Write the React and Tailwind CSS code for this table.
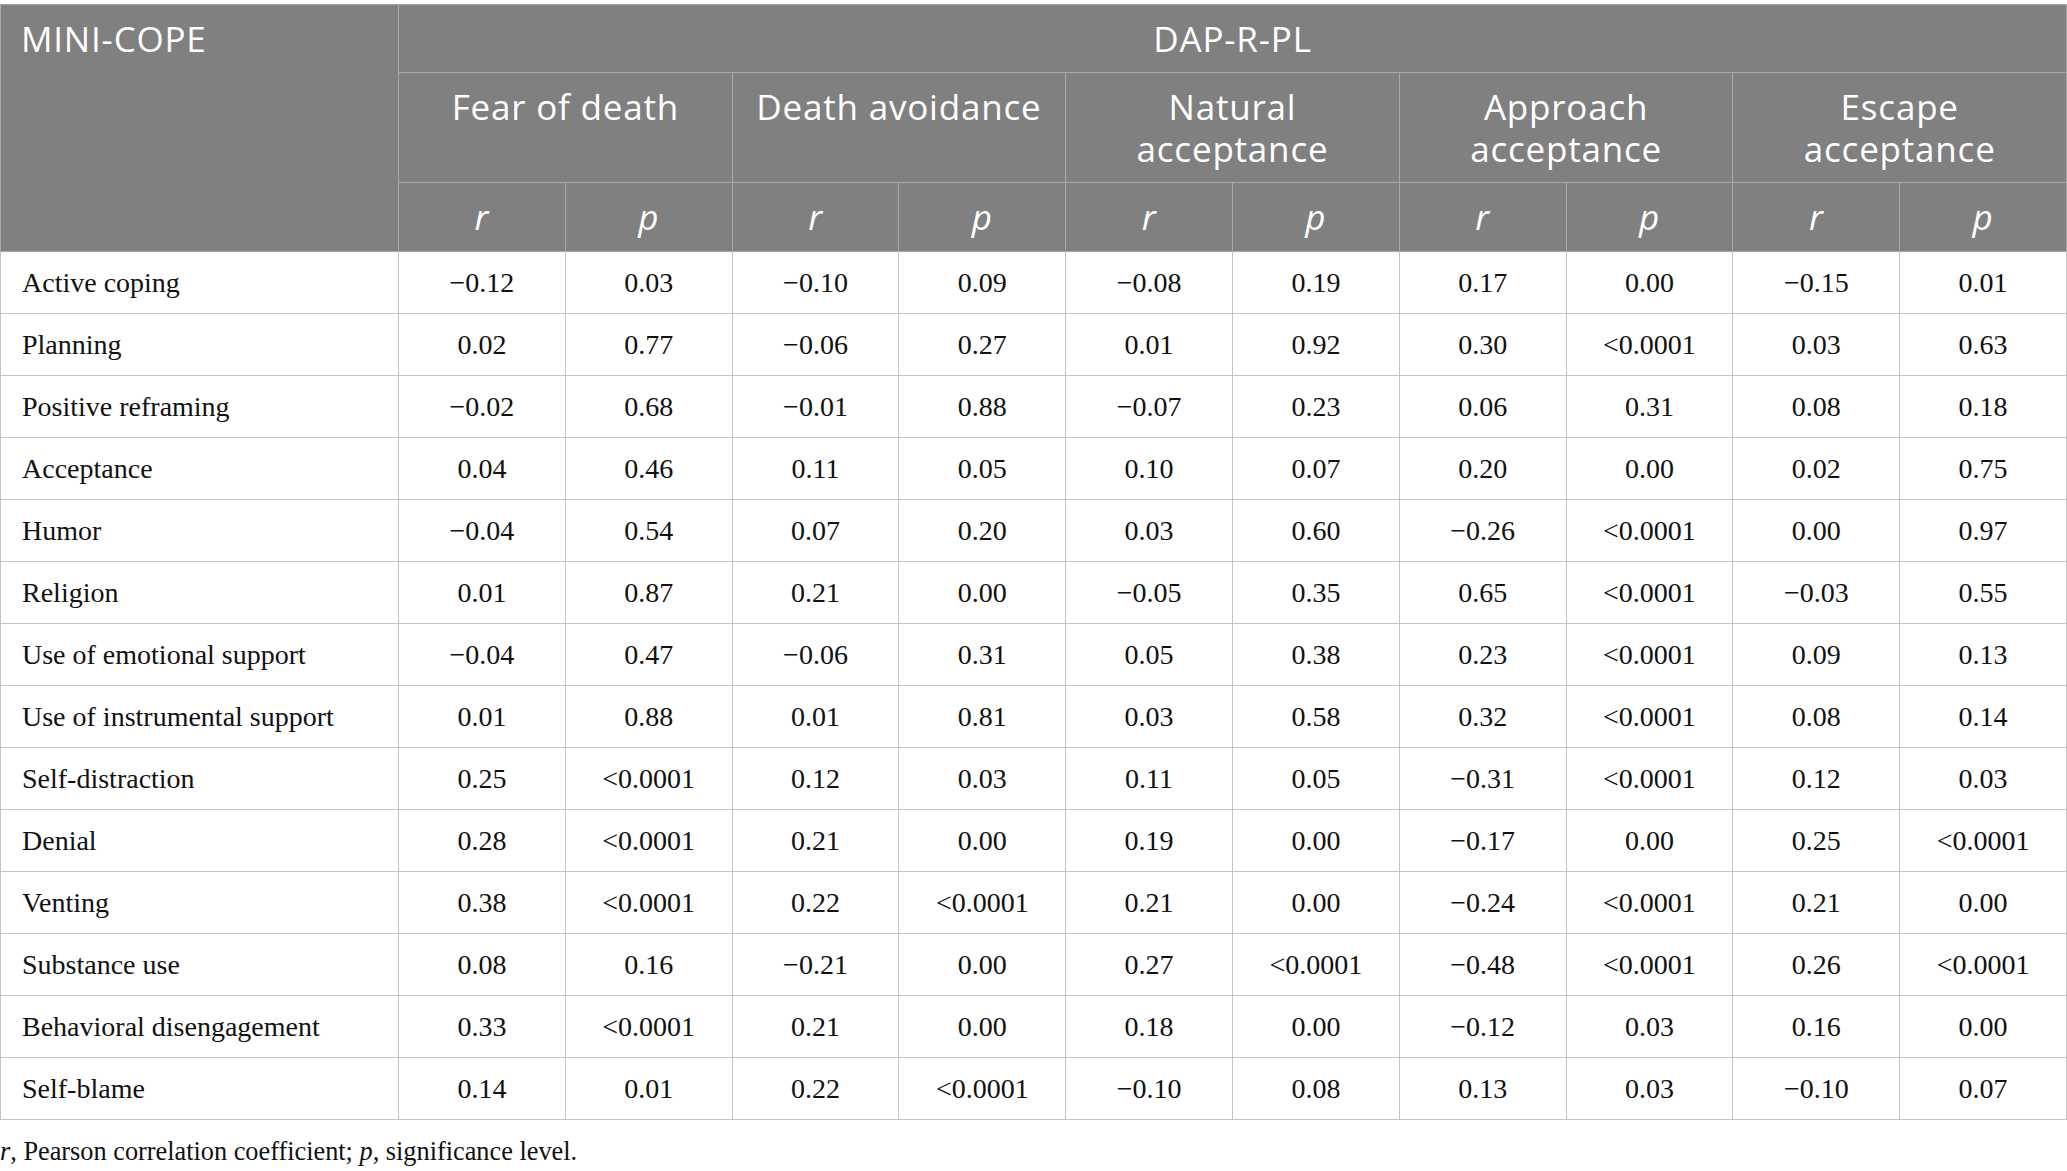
import React from "react";

const groups = [
  ["Fear of death"],
  ["Death avoidance"],
  ["Natural", "acceptance"],
  ["Approach", "acceptance"],
  ["Escape", "acceptance"],
];

const rows = [
  ["Active coping", "−0.12", "0.03", "−0.10", "0.09", "−0.08", "0.19", "0.17", "0.00", "−0.15", "0.01"],
  ["Planning", "0.02", "0.77", "−0.06", "0.27", "0.01", "0.92", "0.30", "<0.0001", "0.03", "0.63"],
  ["Positive reframing", "−0.02", "0.68", "−0.01", "0.88", "−0.07", "0.23", "0.06", "0.31", "0.08", "0.18"],
  ["Acceptance", "0.04", "0.46", "0.11", "0.05", "0.10", "0.07", "0.20", "0.00", "0.02", "0.75"],
  ["Humor", "−0.04", "0.54", "0.07", "0.20", "0.03", "0.60", "−0.26", "<0.0001", "0.00", "0.97"],
  ["Religion", "0.01", "0.87", "0.21", "0.00", "−0.05", "0.35", "0.65", "<0.0001", "−0.03", "0.55"],
  ["Use of emotional support", "−0.04", "0.47", "−0.06", "0.31", "0.05", "0.38", "0.23", "<0.0001", "0.09", "0.13"],
  ["Use of instrumental support", "0.01", "0.88", "0.01", "0.81", "0.03", "0.58", "0.32", "<0.0001", "0.08", "0.14"],
  ["Self-distraction", "0.25", "<0.0001", "0.12", "0.03", "0.11", "0.05", "−0.31", "<0.0001", "0.12", "0.03"],
  ["Denial", "0.28", "<0.0001", "0.21", "0.00", "0.19", "0.00", "−0.17", "0.00", "0.25", "<0.0001"],
  ["Venting", "0.38", "<0.0001", "0.22", "<0.0001", "0.21", "0.00", "−0.24", "<0.0001", "0.21", "0.00"],
  ["Substance use", "0.08", "0.16", "−0.21", "0.00", "0.27", "<0.0001", "−0.48", "<0.0001", "0.26", "<0.0001"],
  ["Behavioral disengagement", "0.33", "<0.0001", "0.21", "0.00", "0.18", "0.00", "−0.12", "0.03", "0.16", "0.00"],
  ["Self-blame", "0.14", "0.01", "0.22", "<0.0001", "−0.10", "0.08", "0.13", "0.03", "−0.10", "0.07"],
];

export default function App() {
  return (
    <div className="w-[2067px] bg-white pt-[4px]">
      <table className="w-[2066px] table-fixed border-collapse">
        <colgroup>
          <col className="w-[398px]" />
          {Array.from({ length: 10 }).map((_, i) => (
            <col key={i} className="w-[166.8px]" />
          ))}
        </colgroup>
        <thead className="bg-[#7f807f] text-white font-['Open_Sans',sans-serif] text-[35px] tracking-[0.8px] leading-[42px]">
          <tr className="h-[68px]">
            <th
              rowSpan={3}
              className="border border-[#a8a8a8] px-[20px] pt-[13px] text-left align-top font-normal"
            >
              MINI-COPE
            </th>
            <th colSpan={10} className="border border-[#a8a8a8] pt-[13px] align-top font-normal">
              DAP-R-PL
            </th>
          </tr>
          <tr className="h-[110px]">
            {groups.map((g, i) => (
              <th key={i} colSpan={2} className="border border-[#a8a8a8] pt-[13px] align-top font-normal">
                {g.map((l, j) => (
                  <div key={j}>{l}</div>
                ))}
              </th>
            ))}
          </tr>
          <tr className="h-[69px]">
            {groups.map((_, i) => (
              <React.Fragment key={i}>
                <th className="border border-[#a8a8a8] align-middle font-normal italic">r</th>
                <th className="border border-[#a8a8a8] align-middle font-normal italic">p</th>
              </React.Fragment>
            ))}
          </tr>
        </thead>
        <tbody className="font-['Liberation_Serif',serif] text-[28px] text-[#111]">
          {rows.map((r, i) => (
            <tr key={i} className="h-[62px]">
              {r.map((c, j) => (
                <td
                  key={j}
                  className={
                    j === 0
                      ? "border border-[#c4c4c4] px-[21px] text-left align-middle"
                      : "border border-[#c4c4c4] text-center align-middle"
                  }
                >
                  {c}
                </td>
              ))}
            </tr>
          ))}
        </tbody>
      </table>
      <p className="mt-[12px] font-['Liberation_Serif',serif] text-[26.3px] text-[#111]">
        <i>r</i>, Pearson correlation coefficient; <i>p</i>, significance level.
      </p>
    </div>
  );
}
